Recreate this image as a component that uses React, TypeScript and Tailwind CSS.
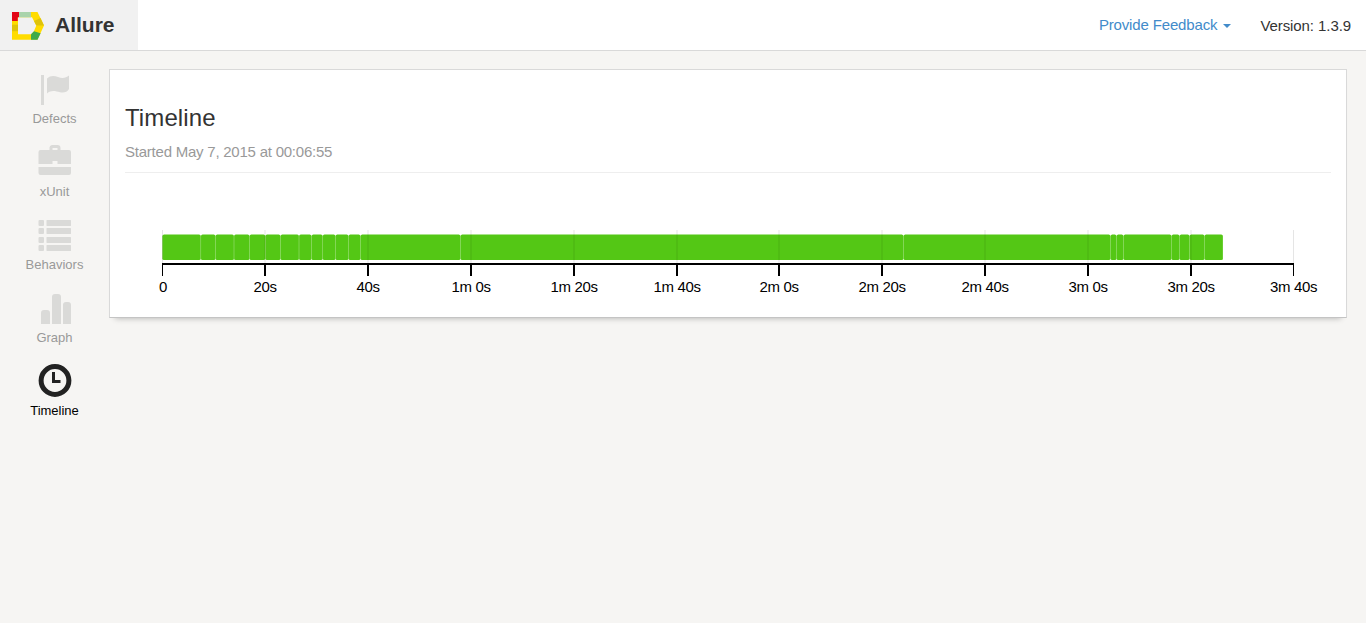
import React from 'react';

const edges = [162.3, 200.8, 215.5, 234, 249.5, 265.3, 280.5, 299, 311.5, 322.7, 335.5, 348.5, 360.5, 460.5, 903.5, 1110.5, 1116.5, 1123.5, 1171.5, 1179.5, 1189.5, 1204.5, 1223];

const ticks = [
  { x: 162.5, label: '0' },
  { x: 265, label: '20s' },
  { x: 368, label: '40s' },
  { x: 471, label: '1m 0s' },
  { x: 574, label: '1m 20s' },
  { x: 677, label: '1m 40s' },
  { x: 779, label: '2m 0s' },
  { x: 882, label: '2m 20s' },
  { x: 985, label: '2m 40s' },
  { x: 1088, label: '3m 0s' },
  { x: 1191, label: '3m 20s' },
  { x: 1293.5, label: '3m 40s' },
];

function Logo() {
  return (
    <svg className="ml-3 mt-3 h-7 w-8 shrink-0" viewBox="0 0 32 28">
      <path
        fillRule="evenodd"
        d="M0 0h25.500L32 13.400L25.500 27.700H0zM6 5.300V22.300H19.300L21.700 19.700L24.300 13.500L20 5.300z"
        fill="#ffdc00"
      />
      <path d="M7 0h12v5.300H7z" fill="#a9d3ab" />
      <path d="M22 9l6.500-3L32 13.400h-7.700z" fill="#dfc30b" />
      <path d="M0 12.700h6v6.500H0z" fill="#dfc30b" />
      <path d="M19 22.300l3-3 6.600 2-3.100 6.400H19z" fill="#3fab49" />
      <path d="M0 0h7v5L5.700 5.500V9H0z" fill="#e30617" />
    </svg>
  );
}

const navItems = [
  {
    label: 'Defects',
    icon: (
      <>
        <path d="M3 2h3v30H3z" />
        <path d="M9 5.500C12 2.500 16 2.300 20 4c4 1.700 8 1.200 11-1.500V16c-1.500 3-5.500 4.200-9 3.200-4.500-1.200-9-2.500-13 1.300z" />
      </>
    ),
  },
  {
    label: 'xUnit',
    icon: (
      <path
        fillRule="evenodd"
        d="M11.500 4V2.500A3 3 0 0 1 14.500 -1h5a3 3 0 0 1 3 3V4H31a2 2 0 0 1 2 2v12H19.500v-3h-5V18H0.500V6a2 2 0 0 1 2-2zM14.500 4h5V2h-5zM0.500 21h32.500v6a2 2 0 0 1-2 2H2.500a2 2 0 0 1-2-2z"
      />
    ),
  },
  {
    label: 'Behaviors',
    icon: (
      <>
        {[1, 9, 18, 26].map((y) => (
          <g key={y}>
            <rect x="0.500" y={y} width="5.500" height="6" rx="1" />
            <rect x="8.500" y={y} width="24.500" height="6" rx="0.500" />
          </g>
        ))}
      </>
    ),
  },
  {
    label: 'Graph',
    icon: (
      <path d="M3 32V21q0-3 3-3h3q3 0 3 3v11zM14 32V5q0-3 3-3h3q3 0 3 3v27zM25 32V13q0-3 3-3h2q3 0 3 3v19z" />
    ),
  },
  {
    label: 'Timeline',
    active: true,
    icon: (
      <>
        <circle cx="17" cy="15.500" r="13.900" fill="none" stroke="currentColor" strokeWidth="5" />
        <path d="M14 7h3v8h5.500v3H14z" />
      </>
    ),
  },
];

function Chart() {
  return (
    <svg className="block h-[110px] w-[1206px]" viewBox="125 200 1206 110">
      <path d="M162.300 247.500H1223" stroke="#54c715" strokeOpacity="0.5" strokeWidth="24" />
      {edges.slice(0, -1).map((x, i) => (
        <rect key={x} x={x + 0.250} y="234.600" width={edges[i + 1] - x - 0.500} height="25.400" rx="1.500" fill="#54c715" />
      ))}
      {ticks.map((t) => (
        <g key={t.label}>
          <path d={`M${t.x} 230V264`} stroke="#000" strokeOpacity="0.1" />
          <path d={`M${t.x} 264V276`} stroke="#000" strokeWidth={t.label === '0' || t.label === '3m 40s' ? 1 : 2} />
          <text x={t.label === '0' ? t.x + 0.5 : t.x} y="292" textAnchor="middle" fill="#000" className="text-[15px] tracking-[-0.35px]">
            {t.label}
          </text>
        </g>
      ))}
      <path d="M162 264H1294" stroke="#000" strokeWidth="2" />
    </svg>
  );
}

export default function App() {
  return (
    <div className="flex h-[623px] w-full flex-col bg-[#f6f5f3] font-['Liberation_Sans',Arial,sans-serif] text-[15px] text-[#333]">
      <header className="flex h-[51px] shrink-0 justify-between border-b border-[#d9d9d9] bg-white">
        <div className="flex w-[138px] bg-[#f1f1f1]">
          <Logo />
          <span className="ml-[11px] mt-[10px] text-[21px] leading-[30px] font-bold">Allure</span>
        </div>
        <div className="flex pr-[15px] leading-5">
          <a className="mt-[15px] flex text-[#428bca]">
            <span className="tracking-[-0.15px]">Provide Feedback</span>
            <svg className="ml-[6px] mt-[9px] h-1 w-2" viewBox="0 0 8 4">
              <path d="M0 0h8L4 4z" fill="currentColor" />
            </svg>
          </a>
          <span className="ml-[29px] mt-4 tracking-[-0.08px]">Version: 1.3.9</span>
        </div>
      </header>
      <div className="flex flex-1">
        <nav className="flex w-[109px] shrink-0 flex-col pt-[22px]">
          {navItems.map((item) => (
            <a
              key={item.label}
              className={`flex h-[73px] flex-col items-center text-[13px] ${item.active ? 'text-black' : 'text-[#999]'}`}
            >
              <svg
                className={`h-[33px] w-[33px] shrink-0 overflow-visible ${item.active ? 'text-[#222]' : 'text-[#dadad8]'}`}
                viewBox="0 0 33 33"
                fill="currentColor"
              >
                {item.icon}
              </svg>
              <span className="mt-[4px] leading-[18px]">{item.label}</span>
            </a>
          ))}
        </nav>
        <main className="mt-[18px] h-[249px] w-[1238px] border border-[#d9d9d9] border-b-[#c4c4c4] bg-white px-[15px] shadow-[0_6px_6px_-6px_rgba(0,0,0,0.3)]">
          <h1 className="mt-[33px] text-[24px] leading-[30px] tracking-[0.1px] text-[#333]">Timeline</h1>
          <p className="mt-[9px] h-[31px] border-b border-[#eee] leading-5 tracking-[-0.23px] text-[#999]">
            Started May 7, 2015 at 00:06:55
          </p>
          <div className="mt-[27px]">
            <Chart />
          </div>
        </main>
      </div>
    </div>
  );
}
